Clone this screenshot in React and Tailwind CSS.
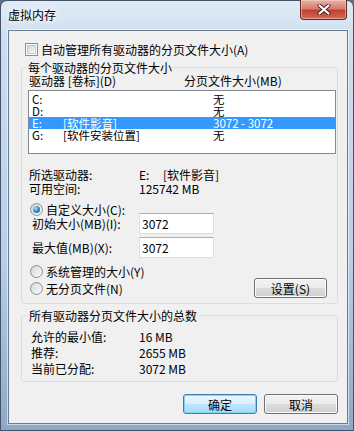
import React from 'react';

// Win7 style "虚拟内存" dialog

function CheckBox() {
  return (
    <span className="flex h-[13px] w-[13px] shrink-0 items-center justify-center border border-[#8e8f8f] bg-white">
      <span className="h-[9px] w-[9px] border border-[#c6c8cc] bg-gradient-to-br from-[#d3d5d9] to-[#f8f8f8]" />
    </span>
  );
}

function Radio({ checked }) {
  return (
    <span className="flex h-[13px] w-[13px] shrink-0 items-center justify-center rounded-full border border-[#8e8f8f] bg-gradient-to-br from-[#cfd1d4] to-[#fbfbfb]">
      {checked ? (
        <span className="h-[7px] w-[7px] rounded-full bg-[radial-gradient(circle_at_35%_30%,#a6e6ff_0%,#3d93d2_45%,#1c4d7b_100%)]" />
      ) : (
        <span className="h-[9px] w-[9px] rounded-full bg-gradient-to-br from-[#dadbde] to-[#f7f7f7]" />
      )}
    </span>
  );
}

function Button({ children, primary, className = '' }) {
  const look = primary
    ? 'border-[#3c7fb1] bg-[linear-gradient(180deg,#eaf6fd_0%,#d9f0fc_50%,#bee6fd_50%,#a7d9f5_100%)] shadow-[inset_0_0_0_1px_#7fd4f9]'
    : 'border-[#707070] bg-[linear-gradient(180deg,#f2f2f2_0%,#ebebeb_50%,#dddddd_50%,#cfcfcf_100%)] shadow-[inset_0_0_0_1px_#fcfcfc]';
  return (
    <div className={`flex h-[20px] items-center justify-center rounded-[3px] border ${look} ${className}`}>
      {children}
    </div>
  );
}

function CloseButton() {
  return (
    <div className="-mt-px mr-px flex h-[20px] w-[47px] items-center justify-center rounded-b-[4px] border border-t-0 border-[#5c2a24] bg-[linear-gradient(180deg,#eab0a7_0%,#d77d6f_45%,#c2402f_55%,#d06a57_100%)] shadow-[inset_0_0_0_1px_rgba(255,220,210,0.5)]">
      <svg width="14" height="11" viewBox="0 0 14 11">
        <path d="M2.5 1.5 L11.5 9.5 M11.5 1.5 L2.5 9.5" stroke="#4a1d18" strokeWidth="4" strokeLinecap="round" />
        <path d="M2.5 1.5 L11.5 9.5 M11.5 1.5 L2.5 9.5" stroke="#ffffff" strokeWidth="2.2" strokeLinecap="round" />
      </svg>
    </div>
  );
}

const drives = [
  { d: 'C:', label: '', size: '无' },
  { d: 'D:', label: '', size: '无' },
  { d: 'E:', label: '[软件影音]', size: '3072 - 3072', selected: true },
  { d: 'G:', label: '[软件安装位置]', size: '无' },
];

export default function App() {
  return (
    <div className="h-[431px] w-[354px] bg-[#5d6f86] font-['Noto_Sans_CJK_SC',sans-serif] text-[12px] leading-[13px] text-black">
      <div className="flex h-full flex-col rounded-t-[7px] border border-[#42546a] bg-[linear-gradient(180deg,#e1ebf6_0%,#cbdcef_10%,#b9cfe8_60%,#8ea8c6_100%)] pb-[6px] pl-[7px] pr-[5px]">
        {/* title bar */}
        <div className="flex h-[29px] items-start justify-between">
          <span className="pt-[7px] text-[12px] leading-[13px] [text-shadow:0_0_5px_#ffffff,0_0_8px_#ffffff]">虚拟内存</span>
          <CloseButton />
        </div>

        {/* client area */}
        <div className="flex flex-1 flex-col border border-[#6a7c90] bg-[#f0f0f0] shadow-[0_0_0_1px_rgba(255,255,255,0.55)]">
          <div className="ml-[16px] mt-[12px] flex h-[13px] items-center gap-[3px]">
            <CheckBox />
            <span>自动管理所有驱动器的分页文件大小(A)</span>
          </div>

          {/* per-drive group */}
          <fieldset className="ml-[12px] mt-[5px] w-[317px] rounded-[3px] border border-[#d5dfe5] pb-[5px]">
            <legend className="ml-[5px] px-px leading-[13px]">每个驱动器的分页文件大小</legend>
            <div className="flex flex-col">
              <div className="flex h-[13px] items-center pl-[7px]">
                <span className="w-[155px]">驱动器 [卷标](D)</span>
                <span>分页文件大小(MB)</span>
              </div>

              <div className="ml-[6px] mt-[3px] h-[64px] w-[308px] border border-[#828790] bg-white pt-[2px] text-[11.5px]">
                {drives.map((r) => (
                  <div
                    key={r.d}
                    className={`flex h-[12px] items-center leading-[12px] ${r.selected ? 'bg-[#3399ff] text-white' : ''}`}
                  >
                    <span className="w-[34px] pl-[3px]">{r.d}</span>
                    <span className="w-[150px]">{r.label}</span>
                    <span>{r.size}</span>
                  </div>
                ))}
              </div>

              <div className="mt-[13px] flex h-[14px] items-center pl-[7px]">
                <span className="w-[110px]">所选驱动器:</span>
                <span className="w-[24px]">E:</span>
                <span>[软件影音]</span>
              </div>
              <div className="flex h-[14px] items-center pl-[7px]">
                <span className="w-[110px]">可用空间:</span>
                <span>125742 MB</span>
              </div>

              <div className="ml-[8px] mt-[8px] flex h-[12px] items-center gap-[3px]">
                <Radio checked />
                <span>自定义大小(C):</span>
              </div>
              <div className="-mt-[2px] ml-[10px] flex h-[21px] items-center">
                <span className="w-[107px]">初始大小(MB)(I):</span>
                <div className="flex h-[21px] w-[75px] items-center border border-[#dbdfe6] border-t-[#abadb3] bg-white pl-[2px]">3072</div>
              </div>
              <div className="ml-[10px] mt-[3px] flex h-[21px] items-center">
                <span className="w-[107px]">最大值(MB)(X):</span>
                <div className="flex h-[21px] w-[75px] items-center border border-[#dbdfe6] border-t-[#abadb3] bg-white pl-[2px]">3072</div>
              </div>

              <div className="ml-[8px] mt-[7px] flex h-[12px] items-center gap-[3px]">
                <Radio />
                <span>系统管理的大小(Y)</span>
              </div>
              <div className="ml-[8px] mr-[10px] mt-px flex h-[20px] items-center justify-between">
                <div className="flex items-center gap-[3px]">
                  <Radio />
                  <span>无分页文件(N)</span>
                </div>
                <Button className="w-[73px]">设置(S)</Button>
              </div>
            </div>
          </fieldset>

          {/* totals group */}
          <fieldset className="ml-[12px] mt-[5px] w-[317px] rounded-[3px] border border-[#d5dfe5] pb-[5px]">
            <legend className="ml-[6px] px-px leading-[13px]">所有驱动器分页文件大小的总数</legend>
            <div className="mt-[6px] flex flex-col pl-[9px]">
              <div className="flex h-[16px] items-center">
                <span className="w-[108px]">允许的最小值:</span>
                <span>16 MB</span>
              </div>
              <div className="flex h-[16px] items-center">
                <span className="w-[108px]">推荐:</span>
                <span>2655 MB</span>
              </div>
              <div className="flex h-[16px] items-center">
                <span className="w-[108px]">当前已分配:</span>
                <span>3072 MB</span>
              </div>
            </div>
          </fieldset>

          <div className="mt-[12px] flex justify-end gap-[7px] pr-[9px]">
            <Button primary className="w-[74px]">确定</Button>
            <Button className="w-[74px]">取消</Button>
          </div>
        </div>
      </div>
    </div>
  );
}
